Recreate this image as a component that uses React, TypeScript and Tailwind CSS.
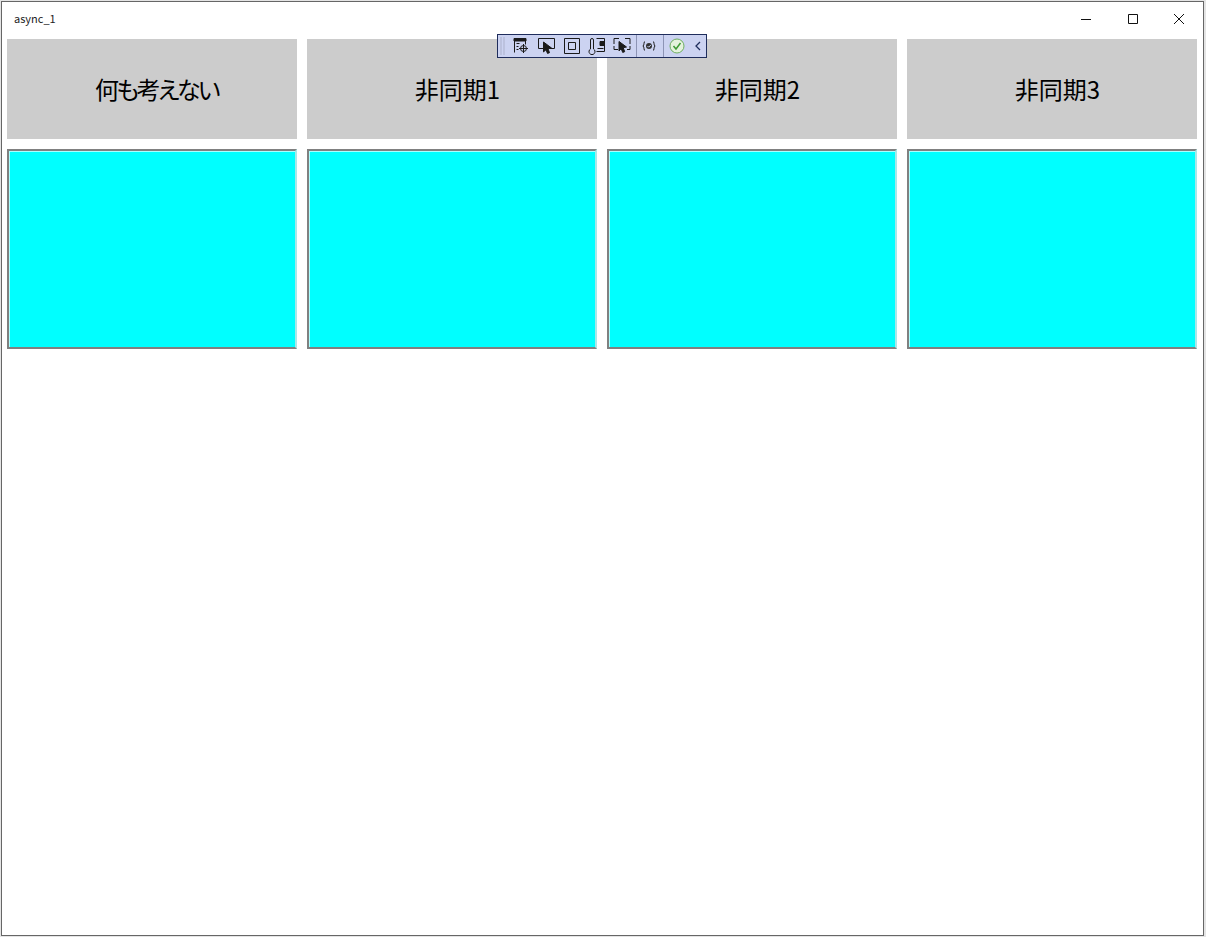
const FONT = "[font-family:'Noto_Sans_CJK_JP','Noto_Sans',sans-serif]";

const COLUMNS = [
  { label: "何も考えない", tracking: "tracking-[-2.600px] pr-[2px]" },
  { label: "非同期1", tracking: "" },
  { label: "非同期2", tracking: "" },
  { label: "非同期3", tracking: "" },
];

function ToolIcon({ children, className }: { children: React.ReactNode; className: string }) {
  return (
    <svg viewBox="0 0 20 18" className={className} fill="none" stroke="#1a1a1a" strokeWidth="1">
      {children}
    </svg>
  );
}

function Toolbar() {
  return (
    <div className="absolute left-[495px] top-[32px] flex h-[24px] w-[210px] items-center border border-[#1f2d5c] bg-[#ccd3f1]">
      <svg viewBox="0 0 6 18" className="ml-[2px] h-[18px] w-[6px]" fill="#8a90a8">
        {[1, 3, 5, 7, 9, 11, 13, 15, 17].map((y) => (
          <g key={y}>
            <rect x="0.5" y={y - 0.5} width="1" height="1" />
            <rect x="3.5" y={y - 0.5} width="1" height="1" />
          </g>
        ))}
      </svg>
      <ToolIcon className="ml-[5px] h-[18px] w-[20px]">
        <path d="M3.500 15.500V1.500h11v6" />
        <path d="M3 1.500h12v2.500H3z" fill="#1a1a1a" />
        <path d="M5.500 6.500h3M5.500 9.500h2M5.500 12.500h2" />
        <circle cx="12.500" cy="11.500" r="3" />
        <path d="M12.500 7v9M8 11.500h9" />
      </ToolIcon>
      <ToolIcon className="ml-[6px] h-[18px] w-[20px]">
        <path d="M6 11.500H1.500v-10h16v10h-5" />
        <path d="M6.500 5l8 6-3.500.7 1.500 4-2 .7-1.500-3.700-2.500 2.200z" fill="#1a1a1a" />
      </ToolIcon>
      <ToolIcon className="ml-[5px] h-[18px] w-[20px]">
        <path d="M2.500 1.500h15v15h-15z" />
        <path d="M6.500 5.500h7v7h-7z" />
      </ToolIcon>
      <ToolIcon className="ml-[5px] h-[18px] w-[20px]">
        <path d="M3.500 3a1.500 1.500 0 0 1 3 0v9a3 3 0 1 1-3 0z" />
        <path d="M9.500 1.500h8v13h-8" />
        <path d="M13 4.500h4v4h-4z" fill="#1a1a1a" />
        <path d="M10.500 11.500h6" />
      </ToolIcon>
      <ToolIcon className="ml-[5px] h-[18px] w-[20px]">
        <path d="M2 7V1.500h5M13 1.500h5V7M2 9v3.500h4M18 9v3.500h-3" />
        <path d="M7 4.500l7.500 5.500-3.300.7 1.500 4-2 .7-1.500-3.700-2.200 2.200z" fill="#1a1a1a" />
      </ToolIcon>
      <div className="ml-[4px] h-[22px] w-px bg-[#8d94b5]" />
      <svg viewBox="0 0 14 12" className="ml-[5px] h-[12px] w-[14px]" fill="none" stroke="#1a1a1a">
        <path d="M3 1.500C1.500 1.500 2.500 5 1 6c1.500 1 .5 4.500 2 4.500M11 1.500C12.500 1.500 11.500 5 13 6c-1.500 1-.5 4.500-2 4.500" />
        <circle cx="7" cy="6" r="3" fill="#333" stroke="none" />
        <path d="M5.500 6l1.200 1.200L9 4.800" stroke="#ccd3f1" />
      </svg>
      <div className="ml-[7px] h-[22px] w-px bg-[#8d94b5]" />
      <svg viewBox="0 0 16 16" className="ml-[5px] h-[16px] w-[16px]" fill="none">
        <circle cx="8" cy="8" r="7" fill="#e4f2dc" stroke="#6fae62" />
        <path d="M4.500 8l2.500 3 4.500-6" stroke="#3f9a35" strokeWidth="1.500" />
      </svg>
      <svg viewBox="0 0 8 10" className="ml-[9px] h-[10px] w-[8px]" fill="none" stroke="#1f2d5c" strokeWidth="1.300">
        <path d="M6 1L2 5l4 4" />
      </svg>
    </div>
  );
}

export default function App() {
  return (
    <div className="h-[937px] w-[1206px] bg-[#e4e4e4] pb-[1px] pl-[1px] pr-[2px] pt-[1px]">
      <div className="relative flex h-full flex-col border border-[#666666] bg-white">
        <div className={`${FONT} flex h-[37px] shrink-0 items-center justify-between`}>
          <span className="pb-[5px] pl-[12px] text-[11px] leading-none text-[#222222]">async_1</span>
          <div className="flex items-center pr-[16px] pb-[3px]">
            <svg viewBox="0 0 16 16" className="h-[16px] w-[16px]" fill="none" stroke="#111111">
              <path d="M3 8.500h10" />
            </svg>
            <svg viewBox="0 0 16 16" className="ml-[31px] h-[16px] w-[16px]" fill="none" stroke="#111111">
              <path d="M3.500 3.500h9v9h-9z" />
            </svg>
            <svg viewBox="0 0 16 16" className="ml-[30px] h-[16px] w-[16px]" fill="none" stroke="#111111">
              <path d="M3 3l10 10M13 3L3 13" />
            </svg>
          </div>
        </div>
        <div className="grid grid-cols-[290px_290px_290px_290px] gap-x-[10px] gap-y-[10px] pl-[5px]">
          {COLUMNS.map(({ label, tracking }) => (
            <div
              key={label}
              className={`${FONT} ${tracking} flex h-[100px] items-center justify-center bg-[#cccccc] pl-[11px] text-[24px] text-black [font-feature-settings:'palt']`}
            >
              {label}
            </div>
          ))}
          {COLUMNS.map(({ label }) => (
            <div
              key={label}
              className="h-[200px] border-2 border-[#808080] border-r-[#a8e8e8] bg-[#00ffff] shadow-[inset_1px_1px_0_#a8ffff]"
            />
          ))}
        </div>
        <Toolbar />
      </div>
    </div>
  );
}
